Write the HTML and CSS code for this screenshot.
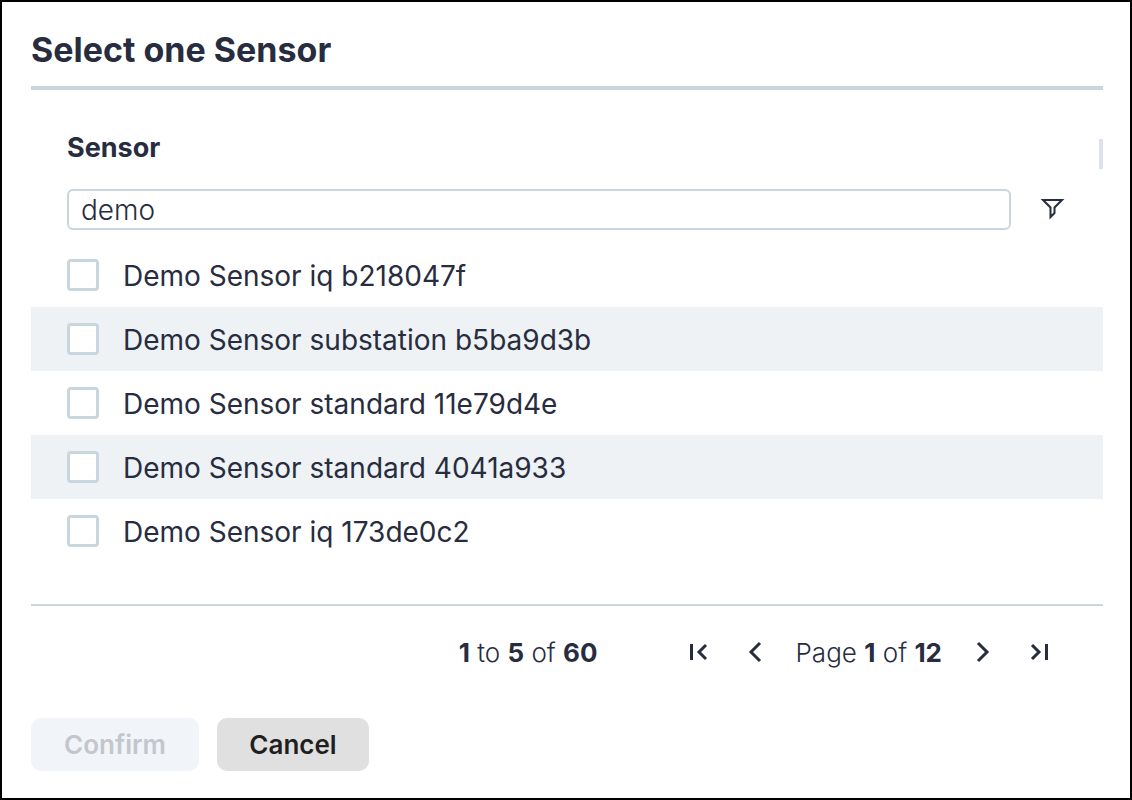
FILE: index.html
```html
<!DOCTYPE html>
<html lang="en">
<head>
<meta charset="utf-8">
<meta name="viewport" content="width=device-width, initial-scale=1">
<title>Select one Sensor</title>
<link rel="stylesheet" href="styles.css">
</head>
<body>
<main class="dialog">
  <h1 class="title">Select one Sensor</h1>
  <table class="grid">
    <thead>
      <tr><th class="head" scope="col"><div class="head-cell"><span class="head-label" id="sensor-heading">Sensor</span><span class="resize-handle"></span></div></th></tr>
      <tr><td class="filter"><div class="filter-cell">
        <input class="filter-input" type="text" value="demo" aria-labelledby="sensor-heading">
        <button class="icon-button" type="button" aria-label="Filter">
          <svg class="icon" viewBox="0 0 32 32"><path d="M8 6H27L19.500 13.500V19L15.500 23V13.500Z"/></svg>
        </button>
      </div></td></tr>
    </thead>
    <tbody>
      <tr class="row"><td><label class="option"><input class="check" type="checkbox"><span class="option-text">Demo Sensor iq b218047f</span></label></td></tr>
      <tr class="row"><td><label class="option"><input class="check" type="checkbox"><span class="option-text">Demo Sensor substation b5ba9d3b</span></label></td></tr>
      <tr class="row"><td><label class="option"><input class="check" type="checkbox"><span class="option-text">Demo Sensor standard 11e79d4e</span></label></td></tr>
      <tr class="row"><td><label class="option"><input class="check" type="checkbox"><span class="option-text">Demo Sensor standard 4041a933</span></label></td></tr>
      <tr class="row"><td><label class="option"><input class="check" type="checkbox"><span class="option-text">Demo Sensor iq 173de0c2</span></label></td></tr>
    </tbody>
  </table>
  <nav class="pager" aria-label="Pagination">
    <span class="summary"><b>1</b> to <b>5</b> of <b>60</b></span>
    <button class="icon-button" type="button" aria-label="First page"><svg class="icon arrow" viewBox="0 0 32 32"><path d="M9.500 8V24M24 9L17 16L24 23"/></svg></button>
    <button class="icon-button" type="button" aria-label="Previous page"><svg class="icon arrow" viewBox="0 0 32 32"><path d="M21 7L12 16L21 25"/></svg></button>
    <span class="page">Page <b>1</b> of <b>12</b></span>
    <button class="icon-button" type="button" aria-label="Next page"><svg class="icon arrow" viewBox="0 0 32 32"><path d="M11 7L20 16L11 25"/></svg></button>
    <button class="icon-button" type="button" aria-label="Last page"><svg class="icon arrow" viewBox="0 0 32 32"><path d="M8 9L15 16L8 23M22.500 8V24"/></svg></button>
  </nav>
  <div class="actions">
    <button class="button button-confirm" type="button" disabled>Confirm</button>
    <button class="button button-cancel" type="button">Cancel</button>
  </div>
</main>
</body>
</html>
```
FILE: styles.css
```css
* {
  box-sizing: border-box;
}

body {
  margin: 0;
  background: #fff;
  color: #272d3f;
  font-family: Inter, "Open Sans", sans-serif;
  font-size: 28px;
  line-height: 32px;
}

.dialog {
  min-height: 100vh;
  border: 2px solid #000;
  padding: 28px 27px 27px 29px;
}

.title {
  margin: 0 0 32px;
  padding-bottom: 16px;
  border-bottom: 4px solid #c8d7df;
  font-size: 34px;
  line-height: 40px;
  font-weight: 700;
}

.grid {
  width: 100%;
  border-collapse: collapse;
}

.grid th,
.grid td {
  padding: 0;
  text-align: left;
}

.head-cell {
  display: flex;
  align-items: center;
  justify-content: space-between;
  height: 64px;
  padding-left: 36px;
}

.head-label {
  padding-bottom: 12px;
  font-size: 27px;
  font-weight: 700;
}

.resize-handle {
  width: 4px;
  height: 30px;
  background: #dde2eb;
}

.filter-cell {
  display: flex;
  align-items: center;
  gap: 24px;
  padding: 3px 36px 13px;
}

.filter-input {
  flex: 1;
  min-width: 0;
  height: 41px;
  padding: 0 12px;
  border: 2px solid #c8d7df;
  border-radius: 6px;
  background: #fff;
  color: inherit;
  font: inherit;
  font-weight: 300;
}

.icon-button {
  display: flex;
  flex: none;
  padding: 0;
  border: 0;
  background: none;
  color: inherit;
}

.icon {
  width: 32px;
  height: 32px;
  fill: none;
  stroke: currentColor;
  stroke-width: 2;
}

.arrow {
  stroke-width: 3;
}

.row:nth-child(even) {
  background: #eef2f5;
}

.option {
  display: flex;
  align-items: center;
  gap: 24px;
  height: 64px;
  padding: 0 36px;
}

.option-text {
  padding-top: 2px;
}

.check {
  appearance: none;
  flex: none;
  width: 32px;
  height: 32px;
  margin: 0;
  border: 3px solid #c8d7df;
  border-radius: 4px;
  background: #fff;
}

.pager {
  display: flex;
  align-items: center;
  justify-content: flex-end;
  gap: 25px;
  margin-top: 41px;
  padding: 30px 47px 30px 0;
  border-top: 2px solid #c8d7df;
  font-size: 26px;
  font-weight: 300;
}

.pager b {
  font-weight: 700;
}

.summary,
.page {
  padding-top: 2px;
  line-height: 30px;
}

.summary {
  margin-right: 59px;
}

.actions {
  display: flex;
  gap: 18px;
  margin-top: 20px;
}

.button {
  min-width: 152px;
  padding: 11px 32px 10px;
  border: 0;
  border-radius: 10px;
  font: inherit;
  font-size: 26px;
  font-weight: 600;
}

.button-confirm {
  min-width: 168px;
  background: #f1f5fa;
  color: #c3c6cc;
}

.button-cancel {
  background: #e0e0e0;
  color: #1f1f1f;
}
```
